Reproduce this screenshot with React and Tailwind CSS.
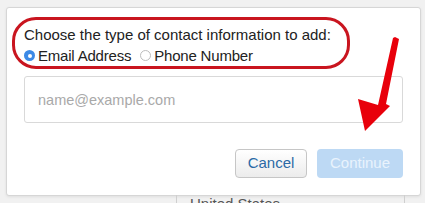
export default function App() {
  return (
    <div
      className="relative h-[203px] w-[425px] overflow-hidden bg-[#f1f1f1]"
      style={{ fontFamily: '"Liberation Sans", Arial, sans-serif' }}
    >
      {/* Dialog */}
      <div className="ml-[6px] mt-[7px] flex h-[189px] w-[415px] flex-col rounded-[3px] border border-[#d6d6d6] bg-white shadow-[0_1px_3px_rgba(0,0,0,0.08)]">
        {/* Red highlight around the question */}
        <div className="ml-[5px] mt-[9px] h-[52px] w-[338px] rounded-[24px] border-[3px] border-[#c9151f] pl-[9px] pt-[4px]">
          <p className="text-[15px] leading-[21px] text-[#222]">
            Choose the type of contact information to add:
          </p>
          <div className="flex items-center text-[15px] leading-[21px] text-[#222]">
            <span className="flex h-[11px] w-[11px] items-center justify-center rounded-full bg-[#3d8ae6]">
              <span className="h-[4px] w-[4px] rounded-full bg-white" />
            </span>
            <span className="ml-[3px] tracking-[-0.2px]">Email Address</span>
            <span className="ml-[9px] h-[11px] w-[11px] rounded-full border border-[#bdbdbd] bg-white" />
            <span className="ml-[3px] tracking-[-0.2px]">Phone Number</span>
          </div>
        </div>

        {/* Email input */}
        <div className="ml-[17px] mt-[7px] flex h-[47px] w-[379px] items-center rounded-[3px] border border-[#d9d9d9] pl-[13px] pt-[3px]">
          <span className="text-[14.5px] text-[#a9a9a9]">name@example.com</span>
        </div>

        {/* Buttons */}
        <div className="mr-[17px] mt-[26px] flex justify-end gap-[10px]">
          <button className="h-[29px] w-[72px] rounded-[4px] border border-[#c6c6c6] bg-gradient-to-b from-white to-[#ececec] text-[15px] text-[#2b6aa6]">
            Cancel
          </button>
          <button className="h-[29px] w-[86px] rounded-[4px] bg-[#bdd9f4] text-[15px] text-[#e9f3fd]">
            Continue
          </button>
        </div>
      </div>

      {/* Select behind the dialog */}
      <div className="ml-[176px] -mt-[1px] h-[12px] w-[229px] border-x border-[#cfcfcf] pl-[13px]">
        <span className="block text-[15px] leading-[18px] text-[#555]">United States</span>
      </div>

      {/* Red arrow annotation */}
      <svg className="absolute left-0 top-0" width="425" height="203" viewBox="0 0 425 203">
        <polygon
          points="395,37 399,39 386,104 390,106 365,131 358,99 378,105 393,38"
          fill="#e8000b"
        />
      </svg>
    </div>
  );
}
